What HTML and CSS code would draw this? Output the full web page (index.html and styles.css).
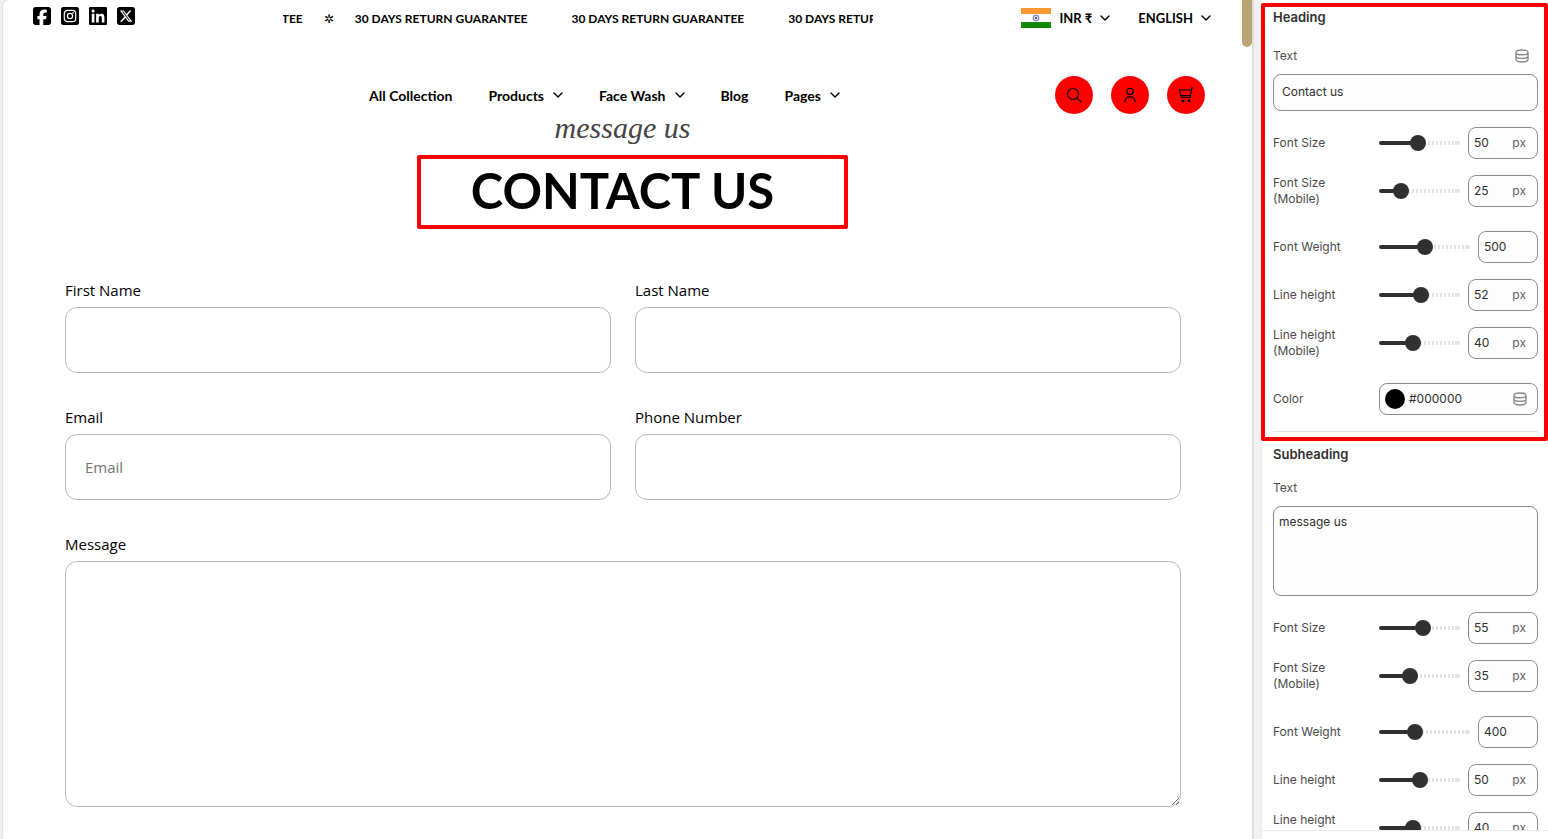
FILE: index.html
```html
<!DOCTYPE html>
<html lang="en">
<head>
  <meta charset="UTF-8" />
  <meta name="viewport" content="width=device-width, initial-scale=1.0"/>
  <title>Contact us</title>
  <link rel="stylesheet" href="styles.css">
</head>
<body>
  <svg class="sprite" aria-hidden="true">
    <symbol id="chevron" viewBox="0 0 10 6"><path d="M1 1l4 4 4-4" fill="none" stroke="currentColor" stroke-width="1.4" stroke-linecap="round" stroke-linejoin="round"/></symbol>
    <symbol id="database" viewBox="0 0 14 14"><path d="M1 3.400C1 2 2.600 1 7 1s6 1 6 2.400S11.400 5.800 7 5.800 1 4.800 1 3.400zM1 3.400v7.200C1 12 2.600 13 7 13s6-1 6-2.400V3.400M1 7c0 1.400 2 2.400 6 2.400s6-1 6-2.400" fill="none" stroke="currentColor" stroke-width="1.400"/></symbol>
  </svg>

  <main class="preview">
    <header>
      <div class="topbar">
        <div class="social">
          <a href="#" aria-label="Facebook"><svg viewBox="0 32 448 448"><path d="M64 32C28.700 32 0 60.700 0 96V416c0 35.300 28.700 64 64 64h98.200V334.200H109.400V256h52.800V222.300c0-87.100 39.400-127.500 125-127.500c16.200 0 44.200 3.200 55.700 6.400V172c-6-.6-16.500-1-29.600-1c-42 0-58.200 15.900-58.200 57.200V256h83.600l-14.400 78.200H255V480H384c35.300 0 64-28.700 64-64V96c0-35.300-28.700-64-64-64H64z"/></svg></a>
          <a href="#" aria-label="Instagram"><svg viewBox="0 0 18 18"><rect width="18" height="18" rx="2.500"/><g fill="none" stroke="#fff" stroke-width="1.200"><rect x="3.300" y="3.300" width="11.400" height="11.400" rx="3.200"/><circle cx="9" cy="9" r="2.600"/></g><circle cx="12.100" cy="5.900" r=".8" fill="#fff"/></svg></a>
          <a href="#" aria-label="LinkedIn"><svg viewBox="0 32 448 448"><path d="M416 32H31.900C14.300 32 0 46.500 0 64.300v383.400C0 465.500 14.300 480 31.900 480H416c17.600 0 32-14.500 32-32.300V64.300c0-17.800-14.400-32.300-32-32.300zM135.400 416H69V202.200h66.500V416zm-33.200-243c-21.300 0-38.500-17.300-38.500-38.500S80.900 96 102.200 96c21.200 0 38.500 17.300 38.500 38.500 0 21.300-17.200 38.500-38.500 38.500zm282.100 243h-66.400V312c0-24.800-.5-56.700-34.500-56.700-34.600 0-39.900 27-39.900 54.900V416h-66.400V202.200h63.700v29.200h.9c8.900-16.800 30.600-34.500 62.900-34.500 67.200 0 79.700 44.300 79.700 101.900V416z"/></svg></a>
          <a href="#" aria-label="X"><svg viewBox="0 32 448 448"><path d="M64 32C28.700 32 0 60.700 0 96V416c0 35.300 28.700 64 64 64H384c35.300 0 64-28.700 64-64V96c0-35.300-28.700-64-64-64H64zm297.100 84L257.300 234.600 379.400 396H283.800L209 298.100 123.300 396H75.800l111-126.900L69.700 116h98l67.700 89.500L313.600 116h47.500zM323.300 367.600L153.400 142.900H125.100L296.900 367.600h26.300z"/></svg></a>
        </div>

        <div class="marquee">
          <div class="marquee-track">
            <span>30 DAYS RETURN GUARANTEE</span>
            <i class="star">✲</i>
            <span>30 DAYS RETURN GUARANTEE</span>
            <i></i>
            <span>30 DAYS RETURN GUARANTEE</span>
            <i></i>
            <span>30 DAYS RETURN GUARANTEE</span>
          </div>
        </div>

        <div class="locale">
          <label class="picker">
            <svg class="flag" viewBox="0 0 30 20"><path fill="#f93" d="M0 0h30v6H0z"/><path fill="#fff" d="M0 6h30v8H0z"/><path fill="#128807" d="M0 14h30v6H0z"/><g fill="none" stroke="#55a"><circle cx="15" cy="10" r="3" stroke-width=".8"/><path d="M12 10h6M15 7v6M13 8l4 4M17 8l-4 4" stroke-width=".4"/></g><circle cx="15" cy="10" r="1" fill="#338"/></svg>
            <select aria-label="Currency"><option>INR ₹</option></select>
            <svg class="chevron"><use href="#chevron"/></svg>
          </label>
          <label class="picker">
            <select aria-label="Language"><option>ENGLISH</option></select>
            <svg class="chevron"><use href="#chevron"/></svg>
          </label>
        </div>
      </div>

      <div class="navbar">
        <nav>
          <a href="#">All Collection</a>
          <a href="#">Products <svg class="chevron"><use href="#chevron"/></svg></a>
          <a href="#">Face Wash <svg class="chevron"><use href="#chevron"/></svg></a>
          <a href="#">Blog</a>
          <a href="#">Pages <svg class="chevron"><use href="#chevron"/></svg></a>
        </nav>
        <div class="actions">
          <button aria-label="Search"><svg viewBox="0 0 16 16"><circle cx="7" cy="7" r="5.500"/><path d="M11 11l4 4"/></svg></button>
          <button aria-label="Account"><svg viewBox="0 0 16 16"><circle cx="8" cy="4.500" r="3.200"/><path d="M3 15c0-3.500 2-5.200 5-5.200s5 1.700 5 5.200"/></svg></button>
          <button aria-label="Cart"><svg viewBox="0 0 16 16"><path d="M15 1.200h-1.400l-1.300 9.200H3.400M13.200 3H1.500l1.200 5.500h9.600M2.700 8.500l.7 1.900"/><circle cx="5" cy="13.800" r=".9" fill="#000"/><circle cx="11" cy="13.800" r=".9" fill="#000"/></svg></button>
        </div>
      </div>
    </header>

    <div class="title">
      <p>message us</p>
      <h1>CONTACT US</h1>
      <div class="callout"></div>
    </div>

    <form class="contact-form">
      <div class="form-group">
        <label for="firstName">First Name</label>
        <input type="text" id="firstName">
      </div>
      <div class="form-group">
        <label for="lastName">Last Name</label>
        <input type="text" id="lastName">
      </div>
      <div class="form-group">
        <label for="email">Email</label>
        <input type="email" id="email" placeholder="Email">
      </div>
      <div class="form-group">
        <label for="phone">Phone Number</label>
        <input type="tel" id="phone">
      </div>
      <div class="form-group wide">
        <label for="message">Message</label>
        <textarea id="message"></textarea>
      </div>
    </form>
    <div class="scrollbar"></div>
  </main>

  <aside class="settings">
    <div class="settings-scroll">
      <section>
        <h2>Heading</h2>
        <div class="label-row">
          <label for="headingText">Text</label>
          <button class="source" aria-label="Connect data source"><svg><use href="#database"/></svg></button>
        </div>
        <input type="text" class="text-input" id="headingText" value="Contact us">

        <div class="field">
          <label for="hSize">Font Size</label>
          <input type="range" id="hSize" min="5" max="100" value="50" style="--v: 0.474">
          <div class="unit"><input type="text" aria-label="Font size value" value="50"><span>px</span></div>
        </div>
        <div class="field tall">
          <label for="hSizeM">Font Size (Mobile)</label>
          <input type="range" id="hSizeM" min="5" max="100" value="25" style="--v: 0.21">
          <div class="unit"><input type="text" aria-label="Mobile font size value" value="25"><span>px</span></div>
        </div>
        <div class="field">
          <label for="hWeight">Font Weight</label>
          <input type="range" id="hWeight" min="100" max="900" value="500" style="--v: 0.5">
          <div class="unit small"><input type="text" aria-label="Font weight value" value="500"></div>
        </div>
        <div class="field">
          <label for="hLine">Line height</label>
          <input type="range" id="hLine" min="0" max="100" value="52" style="--v: 0.52">
          <div class="unit"><input type="text" aria-label="Line height value" value="52"><span>px</span></div>
        </div>
        <div class="field tall">
          <label for="hLineM">Line height (Mobile)</label>
          <input type="range" id="hLineM" min="0" max="100" value="40" style="--v: 0.4">
          <div class="unit"><input type="text" aria-label="Mobile line height value" value="40"><span>px</span></div>
        </div>
        <div class="field">
          <label for="hColor">Color</label>
          <div class="color">
            <span class="swatch"></span>
            <input type="text" id="hColor" value="#000000">
            <button class="source" aria-label="Connect color source"><svg><use href="#database"/></svg></button>
          </div>
        </div>
        <hr>
        <div class="callout"></div>
      </section>

      <section>
        <h2>Subheading</h2>
        <div class="label-row">
          <label for="subText">Text</label>
        </div>
        <textarea class="text-input" id="subText">message us</textarea>

        <div class="field">
          <label for="sSize">Font Size</label>
          <input type="range" id="sSize" min="0" max="100" value="55" style="--v: 0.55">
          <div class="unit"><input type="text" aria-label="Font size value" value="55"><span>px</span></div>
        </div>
        <div class="field tall">
          <label for="sSizeM">Font Size (Mobile)</label>
          <input type="range" id="sSizeM" min="0" max="100" value="35" style="--v: 0.35">
          <div class="unit"><input type="text" aria-label="Mobile font size value" value="35"><span>px</span></div>
        </div>
        <div class="field">
          <label for="sWeight">Font Weight</label>
          <input type="range" id="sWeight" min="100" max="900" value="400" style="--v: 0.375">
          <div class="unit small"><input type="text" aria-label="Font weight value" value="400"></div>
        </div>
        <div class="field">
          <label for="sLine">Line height</label>
          <input type="range" id="sLine" min="0" max="100" value="50" style="--v: 0.5">
          <div class="unit"><input type="text" aria-label="Line height value" value="50"><span>px</span></div>
        </div>
        <div class="field tall">
          <label for="sLineM">Line height (Mobile)</label>
          <input type="range" id="sLineM" min="0" max="100" value="40" style="--v: 0.4">
          <div class="unit"><input type="text" aria-label="Mobile line height value" value="40"><span>px</span></div>
        </div>
      </section>
    </div>
    <footer></footer>
  </aside>
</body>
</html>
```
FILE: styles.css
```css
:root {
  --accent: #ff0000;
  --dark: #303030;
  --muted: #616161;
  --field-border: #8a8a8a;
  --field-bg: #fdfdfd;
}

* {
  box-sizing: border-box;
}

body {
  margin: 0;
  height: 100vh;
  padding-left: 3px;
  display: flex;
  gap: 8px;
  overflow: hidden;
  background: #f1f1f1;
  font-family: Inter, sans-serif;
}

a {
  color: inherit;
  text-decoration: none;
}

button {
  padding: 0;
  border: none;
  cursor: pointer;
}

input, select, textarea {
  font: inherit;
  color: inherit;
}

.sprite {
  position: absolute;
  width: 0;
  height: 0;
}

.callout {
  position: absolute;
  border: 4px solid var(--accent);
  border-radius: 2px;
  pointer-events: none;
}

/* storefront */
.preview {
  position: relative;
  flex: 1;
  min-width: 0;
  padding-right: 10px;
  overflow: hidden;
  background: #fff;
  border-right: 1px solid #dcdcdc;
  border-radius: 6px 0 0 0;
  box-shadow: 0 0 2px #bbb;
  color: #000;
  font-family: Lato, sans-serif;
}

.scrollbar {
  position: absolute;
  top: 0;
  right: 0;
  width: 10px;
  height: 47px;
  background: #baa375;
  border-radius: 0 0 5px 5px;
}

.topbar {
  display: grid;
  grid-template-columns: 250px 1fr 338px;
  align-items: center;
  height: 36px;
  padding: 0 31px 0 30px;
  font-size: 12px;
  font-weight: 700;
}

.social {
  display: flex;
  gap: 10px;
  margin-bottom: 5px;
}

.social svg {
  display: block;
  width: 18px;
  height: 18px;
}

.marquee {
  overflow: hidden;
}

.marquee-track {
  display: flex;
  white-space: nowrap;
  transform: translateX(-153px);
}

.marquee-track span {
  flex: none;
}

.marquee-track i {
  flex: none;
  width: 44px;
  font-style: normal;
  text-align: center;
}

.marquee-track .star {
  width: 52px;
  font-weight: 400;
}

.locale {
  display: flex;
  justify-content: flex-end;
  gap: 28px;
  font-size: 13px;
}

.picker {
  display: flex;
  align-items: center;
  gap: 8px;
}

.picker select {
  appearance: none;
  field-sizing: content;
  padding: 0;
  border: none;
  background: none;
}

.flag {
  width: 30px;
  height: 20px;
}

.chevron {
  width: 10px;
  height: 6px;
}

.navbar {
  display: flex;
  align-items: center;
  margin-top: 40px;
  padding: 0 37px 0 151px;
}

.navbar nav {
  flex: 1;
  display: flex;
  justify-content: center;
  gap: 36px;
  font-size: 14px;
  font-weight: 700;
}

.navbar nav a {
  display: flex;
  align-items: center;
  gap: 9px;
}

.actions {
  display: flex;
  gap: 18px;
}

.actions button {
  display: grid;
  place-items: center;
  width: 38px;
  height: 38px;
  border-radius: 50%;
  background: var(--accent);
}

.actions svg {
  width: 16px;
  height: 16px;
  fill: none;
  stroke: #000;
  stroke-width: 1.2;
  stroke-linecap: round;
}

.title {
  position: relative;
  text-align: center;
}

.title p {
  margin: 0 0 22px;
  color: #444;
  font: italic 30px/28px "Liberation Serif", serif;
}

.title h1 {
  margin: 0 0 64px;
  font-size: 49px;
  line-height: 52px;
  font-weight: 700;
}

.title .callout {
  top: 41px;
  left: calc(50% - 206px);
  width: 431px;
  height: 74px;
}

.contact-form {
  display: grid;
  grid-template-columns: 1fr 1fr;
  gap: 34px 24px;
  padding: 0 61px 0 62px;
  font: 15px/20px "Open Sans", sans-serif;
}

.form-group {
  display: flex;
  flex-direction: column;
  gap: 7px;
}

.form-group.wide {
  grid-column: 1 / -1;
}

.form-group input, .form-group textarea {
  height: 66px;
  padding: 0 19px;
  border: 1px solid #bab6b7;
  border-radius: 12px;
  background: #fff;
}

.form-group textarea {
  height: 246px;
  padding: 19px;
  resize: vertical;
}

.form-group input::placeholder {
  color: #757575;
}

/* settings panel */
.settings {
  flex: none;
  width: 287px;
  display: flex;
  flex-direction: column;
  background: #fff;
  box-shadow: inset 1px 0 #ebebeb;
  color: var(--dark);
  font-size: 12px;
  line-height: 16px;
}

.settings-scroll {
  flex: 1;
  min-height: 0;
  overflow: hidden;
}

.settings footer {
  height: 9px;
  border-top: 1px solid #ebebeb;
}

.settings section {
  position: relative;
  padding: 7px 10px 0 12px;
}

.settings section + section {
  padding-top: 12px;
}

.settings section .callout {
  inset: 3px 0 -9px;
}

.settings h2 {
  margin: 0 0 19px;
  font-size: 13px;
  line-height: 20px;
  font-weight: 600;
}

.settings section + section h2 {
  margin-bottom: 14px;
}

.settings label {
  color: #4a4a4a;
}

.label-row {
  display: flex;
  align-items: center;
  justify-content: space-between;
  height: 20px;
  margin-bottom: 8px;
  padding-right: 9px;
}

.source {
  background: none;
  color: var(--field-border);
}

.source svg {
  display: block;
  width: 14px;
  height: 14px;
}

.text-input {
  display: block;
  width: 100%;
  height: 37px;
  margin-bottom: 16px;
  padding: 0 8px 2px;
  border: 1px solid var(--field-border);
  border-radius: 8px;
  background: var(--field-bg);
}

textarea.text-input {
  height: 90px;
  padding: 7px 5px;
  resize: none;
}

.field {
  display: flex;
  align-items: center;
  gap: 8px;
  min-height: 32px;
  margin-bottom: 16px;
}

.field.tall {
  margin-bottom: 24px;
}

.field label {
  flex: none;
  width: 98px;
  padding-right: 20px;
}

.field input[type="range"] {
  appearance: none;
  flex: 1;
  min-width: 0;
  margin: 0;
  background: none;
}

.field input[type="range"]::-webkit-slider-runnable-track {
  height: 4px;
  border-radius: 2px;
  background:
    linear-gradient(var(--dark), var(--dark)) 0 0 / calc(8px + var(--v) * (100% - 16px)) 100% no-repeat,
    linear-gradient(#e3e3e3, #e3e3e3) 100% 0 / 5px 100% no-repeat,
    repeating-linear-gradient(to left, transparent 0 2px, #e3e3e3 2px 4px);
}

.field input[type="range"]::-webkit-slider-thumb {
  appearance: none;
  width: 16px;
  height: 16px;
  margin-top: -6px;
  border-radius: 50%;
  background: var(--dark);
}

.unit, .color {
  display: flex;
  align-items: center;
  height: 32px;
  border: 1px solid var(--field-border);
  border-radius: 8px;
  background: var(--field-bg);
}

.unit {
  width: 70px;
  padding: 0 11px 0 5px;
}

.unit.small {
  width: 60px;
}

.unit input, .color input {
  flex: 1;
  min-width: 0;
  padding: 0;
  border: none;
  background: none;
}

.unit span {
  color: var(--muted);
}

.color {
  flex: 1;
  gap: 4px;
  min-width: 0;
  padding: 0 10px 0 5px;
}

.swatch {
  width: 20px;
  height: 20px;
  border-radius: 50%;
  background: #000;
}

.settings hr {
  height: 1px;
  margin: 0;
  border: none;
  background: #e3e3e3;
}
```
